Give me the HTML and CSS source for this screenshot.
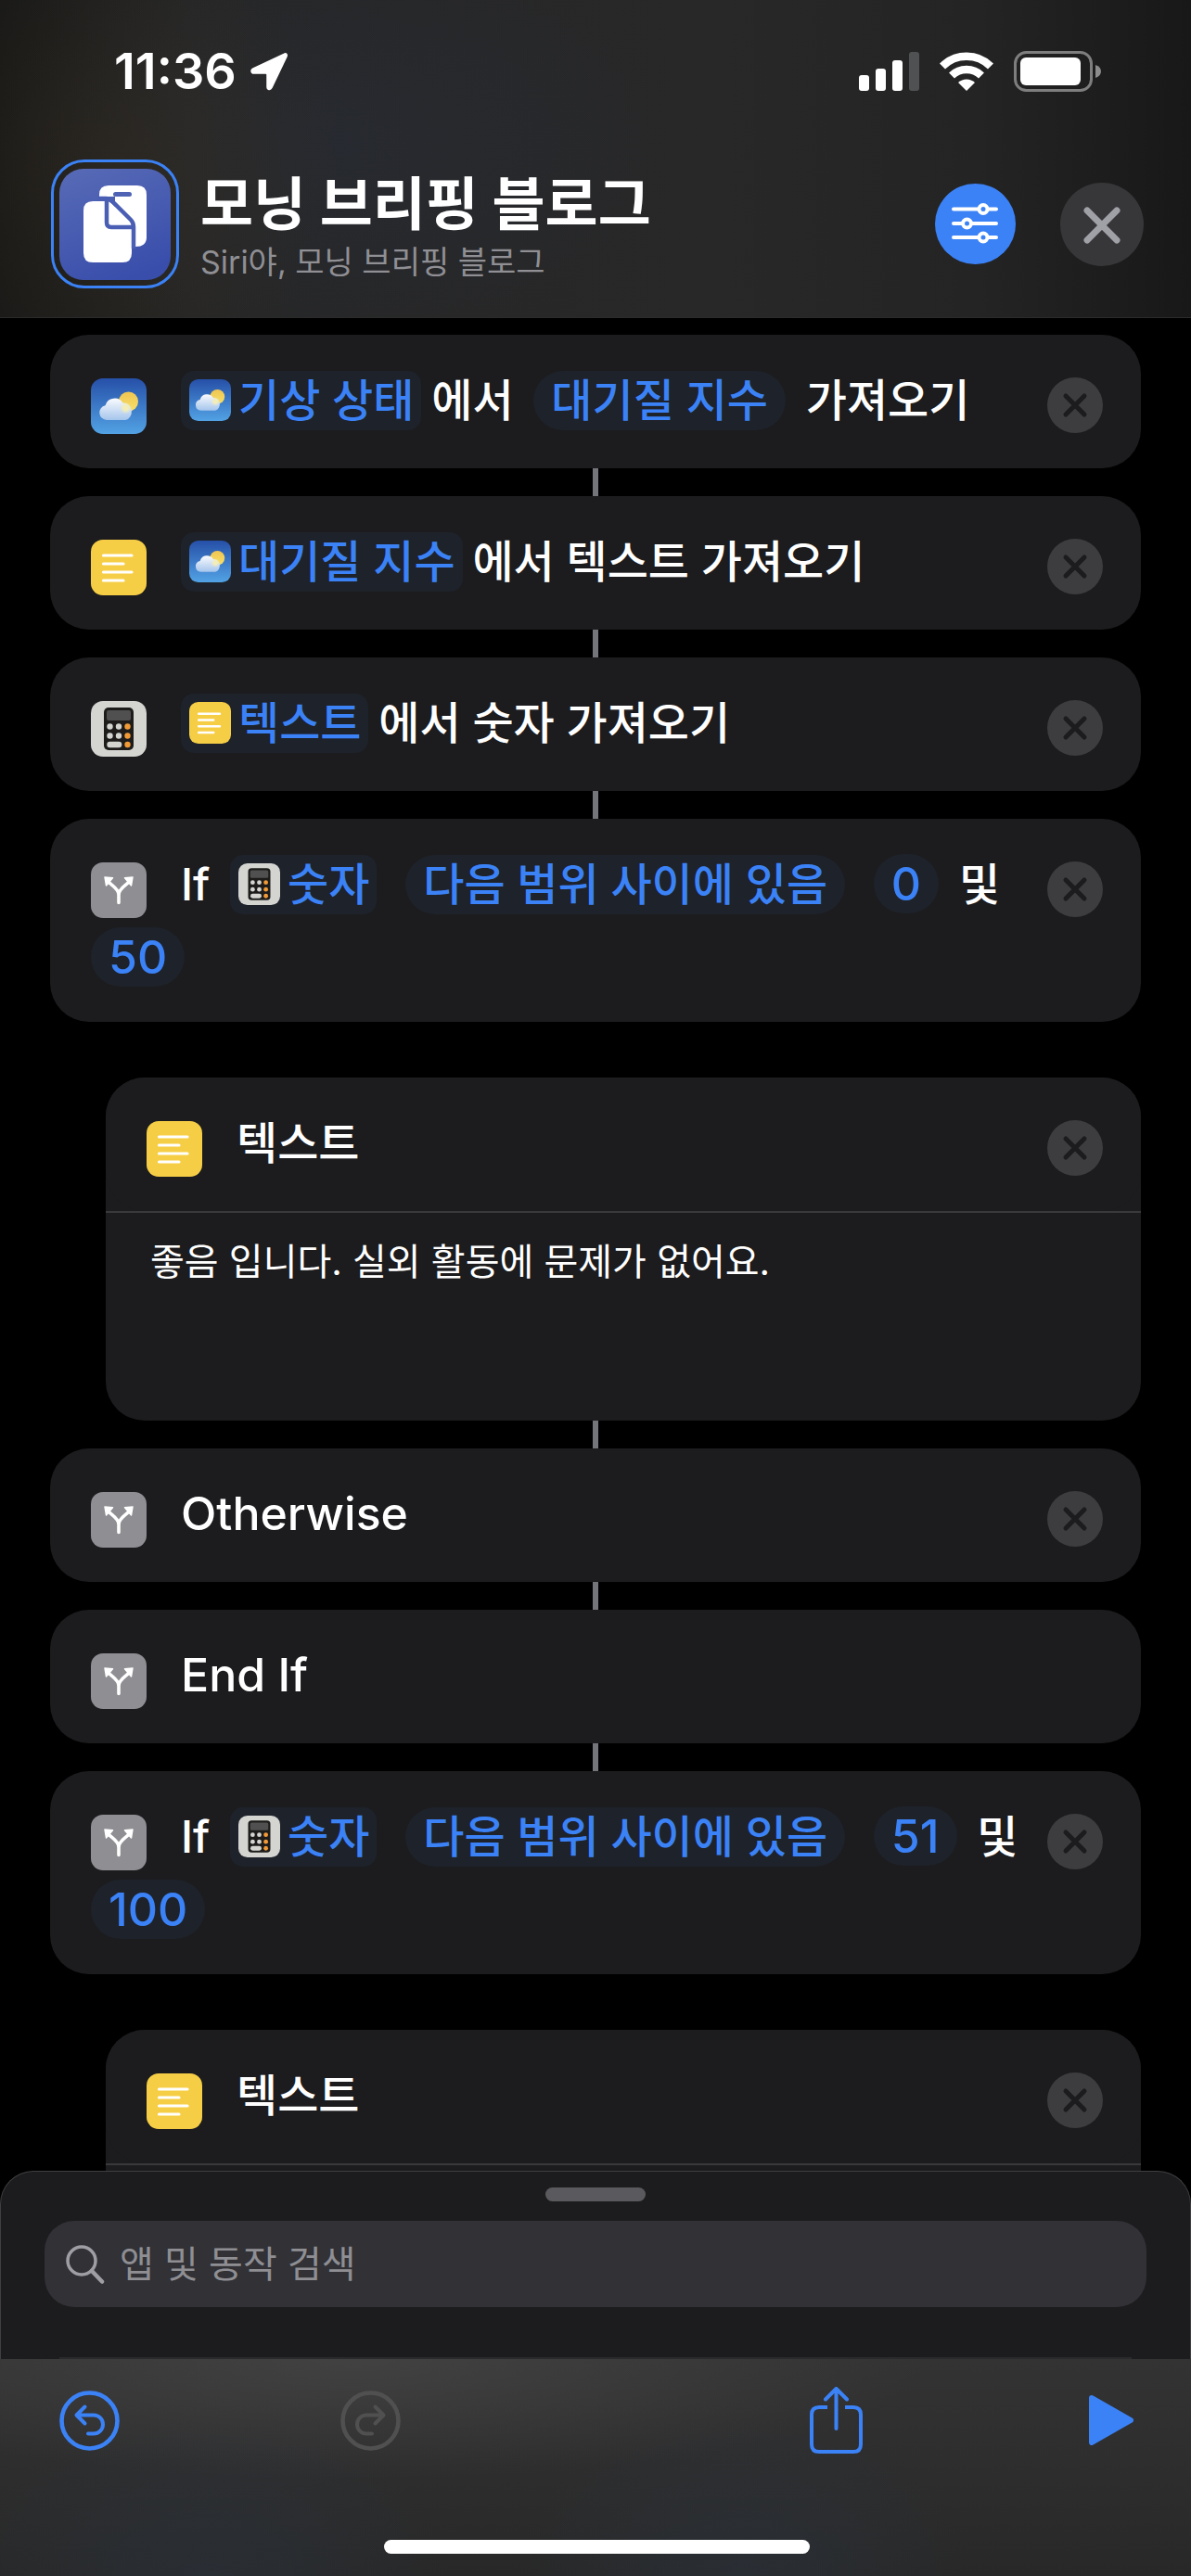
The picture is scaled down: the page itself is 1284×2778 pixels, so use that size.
FILE: index.html
```html
<!DOCTYPE html>
<html lang="ko">
<head>
<meta charset="utf-8">
<meta name="viewport" content="width=device-width, initial-scale=1">
<title>모닝 브리핑 블로그</title>
<link rel="stylesheet" href="styles.css">
</head>
<body>
<svg class="sprite" aria-hidden="true">
  <defs>
    <linearGradient id="sky" x1="0" y1="0" x2="0" y2="1"><stop offset="0" stop-color="#2650a8"/><stop offset="1" stop-color="#52a2e4"/></linearGradient>
    <linearGradient id="cloud" x1="0" y1="0" x2="0" y2="1"><stop offset="0" stop-color="#fafbfe"/><stop offset="1" stop-color="#a5c5ec"/></linearGradient>
    <linearGradient id="sun" x1="0" y1="0" x2="0" y2="1"><stop offset="0" stop-color="#f0c552"/><stop offset="1" stop-color="#f5e069"/></linearGradient>
    <radialGradient id="glow"><stop offset="0.3" stop-color="#f5eeb4"/><stop offset="1" stop-color="#f5eeb4" stop-opacity="0"/></radialGradient>
    <linearGradient id="app" x1="0.2" y1="0" x2="0.6" y2="1"><stop offset="0" stop-color="#5669b6"/><stop offset="1" stop-color="#394eab"/></linearGradient>
  </defs>
  <symbol id="i-weather" viewBox="0 0 60 60">
    <rect width="60" height="60" rx="13" fill="url(#sky)"/>
    <circle cx="40.500" cy="25" r="10.500" fill="url(#sun)"/>
    <path d="M17 45a8 8 0 0 1-1.500-15.800A10.500 10.500 0 0 1 34.500 26.500A9.500 9.500 0 0 1 37.500 45Z" fill="url(#cloud)"/>
    <circle cx="37.500" cy="32" r="6.500" fill="url(#glow)"/>
  </symbol>
  <symbol id="i-text" viewBox="0 0 60 60">
    <rect width="60" height="60" rx="13" fill="#f6ce46"/>
    <path d="M13.500 17H44M13.500 26H35M13.500 35H44M13.500 44H35" stroke="#fff" stroke-width="3.200" stroke-linecap="round"/>
  </symbol>
  <symbol id="i-calc" viewBox="0 0 60 60">
    <rect width="60" height="60" rx="13" fill="#d4d4d1"/>
    <rect x="14" y="7" width="32" height="46" rx="5" fill="#1d1c1b"/>
    <rect x="17" y="10" width="26" height="11" rx="2" fill="#505050"/>
    <g fill="#d4d4d1"><circle cx="20.500" cy="27.500" r="3.200"/><circle cx="30" cy="27.500" r="3.200"/><circle cx="20.500" cy="37.500" r="3.200"/><circle cx="30" cy="37.500" r="3.200"/><rect x="17.300" y="43.800" width="16" height="6.400" rx="3.200"/></g>
    <g fill="#f19a37"><circle cx="39.500" cy="27.500" r="3.200"/><circle cx="39.500" cy="37.500" r="3.200"/><circle cx="39.500" cy="47" r="3.200"/></g>
  </symbol>
  <symbol id="i-branch" viewBox="0 0 60 60">
    <rect width="60" height="60" rx="13" fill="#8e8e93"/>
    <path d="M30 43.500V35C30 28 22 25 18.500 20.500M30 35C30 28 38 25 41.500 20.500" fill="none" stroke="#fff" stroke-width="3.600" stroke-linecap="round"/>
    <path d="M15 16L23.500 16.800L16.500 25ZM45 16L36.500 16.800L43.500 25Z" fill="#fff" stroke="#fff" stroke-width="1.500" stroke-linejoin="round"/>
  </symbol>
  <symbol id="i-remove" viewBox="0 0 60 60">
    <circle cx="30" cy="30" r="30" fill="#3d3d40"/>
    <path d="M20 20L40 40M40 20L20 40" stroke="#1c1c1e" stroke-width="5" stroke-linecap="round"/>
  </symbol>
</svg>

<header class="top">
  <div class="status">
    <div class="status-group">
      <time class="clock">11:36</time>
      <svg class="locate" viewBox="0 0 42 42" aria-hidden="true"><path d="M37 2.500L4 18C1 19.500 1.500 23 5 23H17.500Q19 23 19 24.500V37.500C19 41 22.500 41.500 24 38.500L40 5C41 2.500 39.500 1 37 2.500Z" fill="#fff" stroke="#fff" stroke-width="1.500"/></svg>
    </div>
    <div class="status-group status-right">
      <svg class="signal" viewBox="0 0 65 42" aria-hidden="true"><g fill="#fff"><rect y="25" width="11" height="17" rx="3"/><rect x="18" y="18" width="11" height="24" rx="3"/><rect x="36" y="9" width="11" height="33" rx="3"/></g><rect x="54" width="11" height="42" rx="3" fill="#505153"/></svg>
      <svg class="wifi" viewBox="0 0 58 42" aria-hidden="true"><g fill="none" stroke="#fff" stroke-width="8.500"><path d="M3 15.500A37 37 0 0 1 55 15.500"/><path d="M13 25.500A23 23 0 0 1 45 25.500"/></g><path d="M20 33A13 13 0 0 1 38 33L29 42Z" fill="#fff"/></svg>
      <svg class="battery" viewBox="0 0 95 44" aria-hidden="true"><rect x="1.500" y="1.500" width="82" height="41" rx="12" fill="none" stroke="#7e7e7f" stroke-width="3"/><rect x="7" y="7" width="65" height="30" rx="6" fill="#fff"/><path d="M88 15Q94 17 94 22T88 29Z" fill="#8c8c8d"/></svg>
    </div>
  </div>
  <div class="titlebar">
    <button class="app-icon" type="button" aria-label="아이콘 변경">
      <svg viewBox="0 0 120 120" aria-hidden="true">
        <rect width="120" height="120" rx="26" fill="url(#app)"/>
        <path d="M43 30V28Q43 18 53 18H84Q94 18 94 28V74Q94 84 82 84H60V30Z" fill="#fff"/>
        <rect x="58" y="25" width="20" height="5" rx="2.500" fill="#4f63b4"/>
        <path d="M36 35H50Q54 35 57 38L75 56Q78 59 78 63V91Q78 101 68 101H36Q26 101 26 91V45Q26 35 36 35Z" fill="#fff"/>
        <path d="M42 32H50Q55 32 58 36L77 55Q80 58 80 63V86" fill="none" stroke="#4a5fb3" stroke-width="4.500"/>
        <path d="M51 34V58Q51 63 56 63H79" fill="none" stroke="#4a5fb3" stroke-width="4.500"/>
      </svg>
    </button>
    <div class="names">
      <h1 class="title">모닝 브리핑 블로그</h1>
      <p class="phrase">Siri야, 모닝 브리핑 블로그</p>
    </div>
    <button class="settings" type="button" aria-label="설정">
      <svg viewBox="0 0 87 87" aria-hidden="true"><g stroke="#fff" stroke-width="4" stroke-linecap="round"><path d="M20 27.500H66M20 43H66M20 58H66"/><g fill="#3b82f7"><circle cx="52" cy="27.500" r="4.500"/><circle cx="34.500" cy="43" r="4.500"/><circle cx="52" cy="58" r="4.500"/></g></g></svg>
    </button>
    <button class="close" type="button" aria-label="닫기">
      <svg viewBox="0 0 90 90" aria-hidden="true"><path d="M29 30L61 62M61 30L29 62" stroke="#a0a0a7" stroke-width="7" stroke-linecap="round"/></svg>
    </button>
  </div>
</header>

<main class="editor">
  <ol class="steps">
    <li class="step"><section class="card">
      <svg class="glyph" aria-hidden="true"><use href="#i-weather"/></svg>
      <button class="remove" type="button" aria-label="제거"><svg aria-hidden="true"><use href="#i-remove"/></svg></button>
      <button class="token" type="button"><svg aria-hidden="true"><use href="#i-weather"/></svg>기상 상태</button>
      <span>에서</span>
      <button class="pill" type="button">대기질 지수</button>
      <span>가져오기</span>
    </section></li>
    <li class="step"><section class="card">
      <svg class="glyph" aria-hidden="true"><use href="#i-text"/></svg>
      <button class="remove" type="button" aria-label="제거"><svg aria-hidden="true"><use href="#i-remove"/></svg></button>
      <button class="token" type="button"><svg aria-hidden="true"><use href="#i-weather"/></svg>대기질 지수</button>
      <span>에서 텍스트 가져오기</span>
    </section></li>
    <li class="step"><section class="card">
      <svg class="glyph" aria-hidden="true"><use href="#i-calc"/></svg>
      <button class="remove" type="button" aria-label="제거"><svg aria-hidden="true"><use href="#i-remove"/></svg></button>
      <button class="token" type="button"><svg aria-hidden="true"><use href="#i-text"/></svg>텍스트</button>
      <span>에서 숫자 가져오기</span>
    </section></li>
    <li class="step"><section class="card">
      <svg class="glyph" aria-hidden="true"><use href="#i-branch"/></svg>
      <button class="remove" type="button" aria-label="제거"><svg aria-hidden="true"><use href="#i-remove"/></svg></button>
      <span>If</span>
      <button class="token" type="button"><svg aria-hidden="true"><use href="#i-calc"/></svg>숫자</button>
      <button class="pill" type="button">다음 범위 사이에 있음</button>
      <button class="pill latin" type="button">0</button>
      <span>및</span>
      <button class="pill latin" type="button">50</button>
    </section></li>
    <li class="step nested"><section class="card">
      <svg class="glyph" aria-hidden="true"><use href="#i-text"/></svg>
      <button class="remove" type="button" aria-label="제거"><svg aria-hidden="true"><use href="#i-remove"/></svg></button>
      <label for="text-1">텍스트</label>
      </section>
      <textarea class="note" id="text-1">좋음 입니다. 실외 활동에 문제가 없어요.</textarea>
    </li>
    <li class="step"><section class="card">
      <svg class="glyph" aria-hidden="true"><use href="#i-branch"/></svg>
      <button class="remove" type="button" aria-label="제거"><svg aria-hidden="true"><use href="#i-remove"/></svg></button>
      <span class="latin">Otherwise</span>
    </section></li>
    <li class="step"><section class="card">
      <svg class="glyph" aria-hidden="true"><use href="#i-branch"/></svg>
      <span class="latin">End If</span>
    </section></li>
    <li class="step"><section class="card">
      <svg class="glyph" aria-hidden="true"><use href="#i-branch"/></svg>
      <button class="remove" type="button" aria-label="제거"><svg aria-hidden="true"><use href="#i-remove"/></svg></button>
      <span>If</span>
      <button class="token" type="button"><svg aria-hidden="true"><use href="#i-calc"/></svg>숫자</button>
      <button class="pill" type="button">다음 범위 사이에 있음</button>
      <button class="pill latin" type="button">51</button>
      <span>및</span>
      <button class="pill latin" type="button">100</button>
    </section></li>
    <li class="step nested"><section class="card">
      <svg class="glyph" aria-hidden="true"><use href="#i-text"/></svg>
      <button class="remove" type="button" aria-label="제거"><svg aria-hidden="true"><use href="#i-remove"/></svg></button>
      <label for="text-2">텍스트</label>
      </section>
      <textarea class="note" id="text-2"></textarea>
    </li>
  </ol>
</main>

<section class="sheet">
  <div class="grabber"></div>
  <label class="search">
    <svg viewBox="0 0 42 42" aria-hidden="true"><g fill="none" stroke="#9e9ea4" stroke-linecap="round"><circle cx="17" cy="17" r="15" stroke-width="3.500"/><path d="M28 28L39 39.500" stroke-width="4.500"/></g></svg>
    <input type="search" placeholder="앱 및 동작 검색" aria-label="앱 및 동작 검색">
  </label>
  <div class="peek"></div>
</section>

<footer class="toolbar">
  <div class="tools">
    <div class="tool-group">
      <button class="tool" type="button" aria-label="실행 취소"><svg class="round" viewBox="0 0 65 65" aria-hidden="true"><g fill="none" stroke="currentColor" stroke-width="4" stroke-linecap="round" stroke-linejoin="round"><circle cx="32.500" cy="32.500" r="30" stroke-width="4.600"/><path d="M27.500 17.500L18.500 26.500L27.500 35.500M19 26.500H37A10 10 0 0 1 37 46.500H31"/></g></svg></button>
      <button class="tool" type="button" aria-label="다시 실행" disabled><svg class="round" viewBox="0 0 65 65" aria-hidden="true"><g fill="none" stroke="currentColor" stroke-width="4" stroke-linecap="round" stroke-linejoin="round"><circle cx="32.500" cy="32.500" r="30" stroke-width="4.600"/><path d="M37.500 17.500L46.500 26.500L37.500 35.500M46 26.500H28A10 10 0 0 0 28 46.500H34"/></g></svg></button>
    </div>
    <div class="tool-group">
      <button class="tool" type="button" aria-label="공유"><svg class="share" viewBox="0 0 57 72" aria-hidden="true"><g fill="none" stroke="currentColor" stroke-width="4"><path d="M19 22H10Q2 22 2 30V62Q2 70 10 70H47Q55 70 55 62V30Q55 22 47 22H38"/><path d="M28.500 45V3M17 13.500L28.500 2L40 13.500" stroke-linecap="round" stroke-linejoin="round"/></g></svg></button>
      <button class="tool" type="button" aria-label="실행"><svg class="play" viewBox="0 0 48 54" aria-hidden="true"><path d="M3 3L45 27L3 51Z" fill="currentColor" stroke="currentColor" stroke-width="6" stroke-linejoin="round"/></svg></button>
    </div>
  </div>
  <div class="home"></div>
</footer>
</body>
</html>
```
FILE: styles.css
```css
* { box-sizing: border-box; }

body {
  margin: 0;
  height: 100vh;
  display: flex;
  flex-direction: column;
  background: #000;
  color: #fff;
  font-family: Inter, "Noto Sans CJK KR", sans-serif;
  font-size: 48px;
  font-weight: 500;
}

button, input, textarea { font: inherit; color: inherit; border: 0; margin: 0; padding: 0; background: none; }
button { cursor: pointer; }
svg { display: block; }
.sprite { position: absolute; width: 0; height: 0; }

/* Header */
.top {
  flex: none;
  padding: 49px 51px 31px 55px;
  border-bottom: 1px solid #2b2b2c;
  background:
    radial-gradient(ellipse 240px 240px at 130px 180px, rgba(60, 48, 28, .35), transparent),
    radial-gradient(ellipse 360px 220px at 350px 155px, rgba(40, 48, 66, .35), transparent),
    linear-gradient(90deg, #191918, #262626 16%, #282829 60%, #242424 82%, #181818);
}
.status { display: flex; justify-content: space-between; align-items: center; padding: 0 45px 0 68px; height: 56px; }
.status-group { display: flex; align-items: center; gap: 14px; }
.status-right { gap: 22px; }
.clock { font-size: 54px; font-weight: 600; line-height: 56px; }
.locate { width: 42px; height: 42px; }
.signal { width: 65px; height: 42px; }
.wifi { width: 58px; height: 42px; }
.battery { width: 95px; height: 44px; }

.titlebar { display: flex; align-items: center; padding-top: 67px; }
.app-icon { flex: none; width: 138px; height: 139px; padding: 6px; border: 3px solid #3b82f7; border-radius: 36px; }
.app-icon svg { width: 120px; height: 120px; margin: auto; }
.names { flex: 1; min-width: 0; padding: 10px 0 0 23px; }
.title { margin: 0; font-size: 62px; font-weight: 700; line-height: 72px; }
.phrase { margin: 0; font-size: 34px; font-weight: 400; line-height: 52px; color: #8f8f94; }
.settings, .close { flex: none; border-radius: 50%; }
.settings { width: 87px; height: 87px; background: #3b82f7; }
.close { width: 90px; height: 90px; margin-left: 48px; background: #37373a; }

/* Step list */
.editor { flex: 1; min-height: 0; overflow-y: auto; scrollbar-width: none; padding: 18px 54px; }
.steps { list-style: none; margin: 0; padding: 0; }
.step + .step::before { content: ""; display: block; width: 6px; height: 30px; margin: 0 auto; background: #74747b; }
.step + .nested { margin: 60px 0 0 60px; background: #1c1c1e; border-radius: 42px; }
.step + .nested::before { display: none; }
.card { min-height: 144px; padding: 31px 41px 30px 35px; border-radius: 42px; background: #1c1c1e; line-height: 79px; }
.glyph { float: left; width: 60px; height: 60px; margin: 16px 37px 0 9px; }
.remove { float: right; width: 60px; height: 60px; margin-top: 15px; }
.remove svg { width: 60px; height: 60px; }

.token, .pill { display: inline-block; height: 64px; line-height: 64px; vertical-align: baseline; color: #3b82f7; background: #1e222a; }
.token { padding: 0 8px 0 9px; border-radius: 14px; }
.token svg { display: inline-block; width: 45px; height: 45px; margin-right: 8px; vertical-align: -5px; }
.token + span { margin-left: -2px; }
.pill { padding: 0 19px; margin: 0 9px; border-radius: 32px; }
.latin { font-size: 50px; }
span + .token { margin-left: 9px; }
.token + .pill { margin-left: 18px; }

.note {
  display: block;
  width: 100%;
  height: 226px;
  padding: 27px 48px;
  border-top: 2px solid #39393b;
  outline: 0;
  resize: none;
  font-size: 40px;
  font-weight: 400;
  line-height: 52px;
}

/* Action search sheet */
.sheet {
  flex: none;
  padding: 17px 47px 0;
  border: 1px solid #3f3f41;
  border-bottom: 0;
  border-radius: 36px 36px 0 0;
  background: #1c1c1e;
}
.grabber { width: 108px; height: 15px; margin: 0 auto 21px; border-radius: 8px; background: #5a5a5e; }
.search { display: flex; align-items: center; height: 93px; padding: 0 23px; border-radius: 32px; background: #313136; }
.search svg { flex: none; width: 42px; height: 42px; }
.search input { flex: 1; min-width: 0; margin-left: 16px; font-size: 40px; font-weight: 400; outline: 0; }
.search input::placeholder { color: #8e8e93; opacity: 1; }
.peek { height: 2px; margin: 54px 16px 0; background: #2a2a2c; }

/* Bottom toolbar */
.toolbar {
  flex: none;
  padding: 30px 62px 24px 64px;
  background:
    radial-gradient(ellipse 620px 130px at 380px 0, rgba(80, 80, 80, .5), transparent),
    radial-gradient(ellipse 260px 170px at 220px 100%, rgba(42, 50, 60, .6), transparent),
    radial-gradient(ellipse 240px 170px at 800px 100%, rgba(42, 50, 60, .6), transparent),
    linear-gradient(#333334, #282828);
}
.tools { display: flex; justify-content: space-between; align-items: center; height: 72px; }
.tool-group { display: flex; align-items: center; gap: 238px; }
.tool-group + .tool-group { gap: 244px; }
.tool { color: #3b82f7; }
.tool:disabled { color: #505051; cursor: default; }
.round { width: 65px; height: 65px; }
.share { width: 57px; height: 72px; }
.play { width: 48px; height: 54px; }
.home { width: 459px; height: 15px; margin: 93px auto 0; border-radius: 8px; background: #fff; }
```
